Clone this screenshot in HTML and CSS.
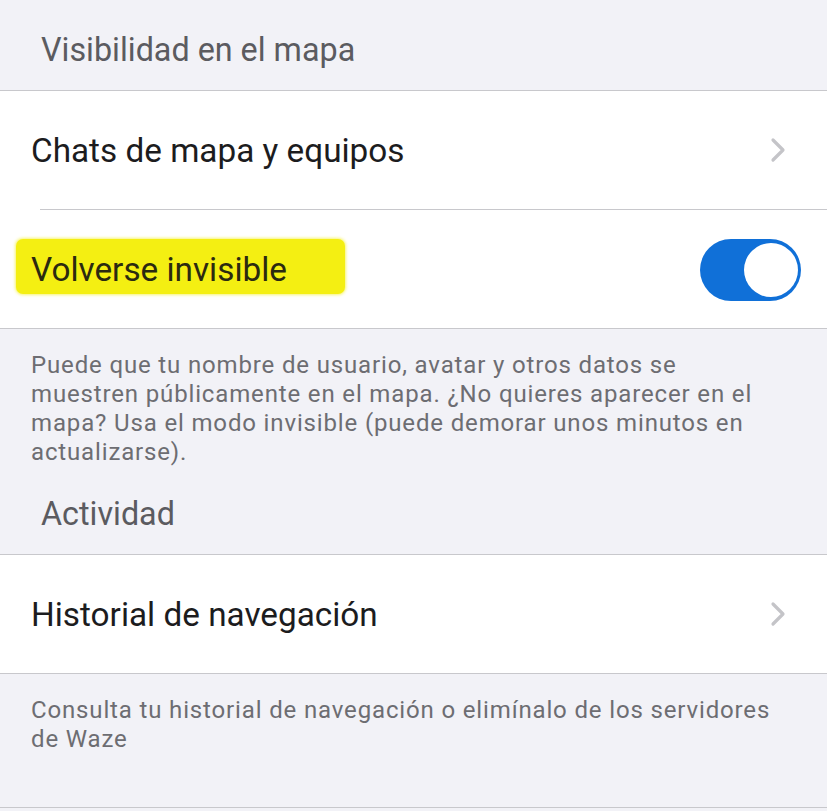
FILE: index.html
```html
<!DOCTYPE html>
<html lang="es">
<head>
<meta charset="utf-8">
<link rel="stylesheet" href="styles.css">
</head>
<body>
<div class="page">
  <div class="section-header">Visibilidad en el mapa</div>
  <div class="group">
    <div class="row">
      <span class="row-title">Chats de mapa y equipos</span>
      <svg class="chevron" width="16" height="26" viewBox="0 0 16 26"><path d="M3 3 L13 13 L3 23" fill="none" stroke="#c4c4c8" stroke-width="3.2" stroke-linecap="round" stroke-linejoin="round"/></svg>
    </div>
    <div class="row row-sep">
      <span class="row-title highlight">Volverse invisible</span>
      <span class="toggle"><span class="knob"></span></span>
    </div>
  </div>
  <div class="section-footer footer-1">Puede que tu nombre de usuario, avatar y otros datos se muestren públicamente en el mapa. ¿No quieres aparecer en el mapa? Usa el modo invisible (puede demorar unos minutos en actualizarse).</div>
  <div class="section-header header-2">Actividad</div>
  <div class="group">
    <div class="row">
      <span class="row-title">Historial de navegación</span>
      <svg class="chevron" width="16" height="26" viewBox="0 0 16 26"><path d="M3 3 L13 13 L3 23" fill="none" stroke="#c4c4c8" stroke-width="3.2" stroke-linecap="round" stroke-linejoin="round"/></svg>
    </div>
  </div>
  <div class="section-footer footer-2">Consulta tu historial de navegación o elimínalo de los servidores de Waze</div>
</div>
</body>
</html>
```
FILE: styles.css
```css
html, body {
  margin: 0;
  padding: 0;
  background: #f2f2f7;
}
.page {
  width: 827px;
  height: 811px;
  overflow: hidden;
  font-family: Roboto, "Noto Sans", sans-serif;
  background: #f2f2f7;
}
.section-header {
  height: 91px;
  box-sizing: border-box;
  padding: 30px 0 0 41px;
  font-size: 32.3px;
  line-height: 40px;
  color: #5b5b60;
  border-bottom: 1px solid #c8c8cc;
}
.header-2 {
  height: auto;
  padding: 0 0 17px 41px;
  margin-top: 27px;
  line-height: 46px;
}
.group {
  background: #ffffff;
  border-bottom: 1px solid #c8c8cc;
}
.row {
  height: 118px;
  display: flex;
  align-items: center;
  justify-content: space-between;
  padding: 0 41px 0 31px;
  box-sizing: border-box;
}
.row-sep {
  position: relative;
  height: 119px;
  padding: 3px 26px 0 31px;
}
.row-sep::before {
  content: "";
  position: absolute;
  left: 40px;
  right: 0;
  top: 0;
  height: 1px;
  background: #c8c8cc;
}
.row-title {
  font-size: 33.3px;
  color: #1c1c1e;
}
.highlight {
  display: inline-block;
  line-height: 38px;
  background: #f4ef12;
  color: #2b2a10;
  margin: -7px 0 0 -15px;
  padding: 12px 58px 5px 15px;
  border-radius: 7px;
  box-shadow: 0 0 3px 1px rgba(244, 239, 18, 0.6);
}
.chevron {
  display: block;
}
.toggle {
  width: 101px;
  height: 62px;
  border-radius: 31px;
  background: #1070d8;
  display: flex;
  align-items: center;
  justify-content: flex-end;
  padding: 0 3px;
  box-sizing: border-box;
}
.knob {
  width: 54px;
  height: 54px;
  border-radius: 50%;
  background: #ffffff;
}
.section-footer {
  padding: 22px 45px 0 31px;
  font-size: 24px;
  line-height: 29px;
  color: #6d6d72;
  letter-spacing: 0.85px;
  box-sizing: border-box;
}
.footer-1 {
  height: 135px;
}
.footer-2 {
  height: 134px;
  border-bottom: 1px solid #c8c8cc;
}
```
